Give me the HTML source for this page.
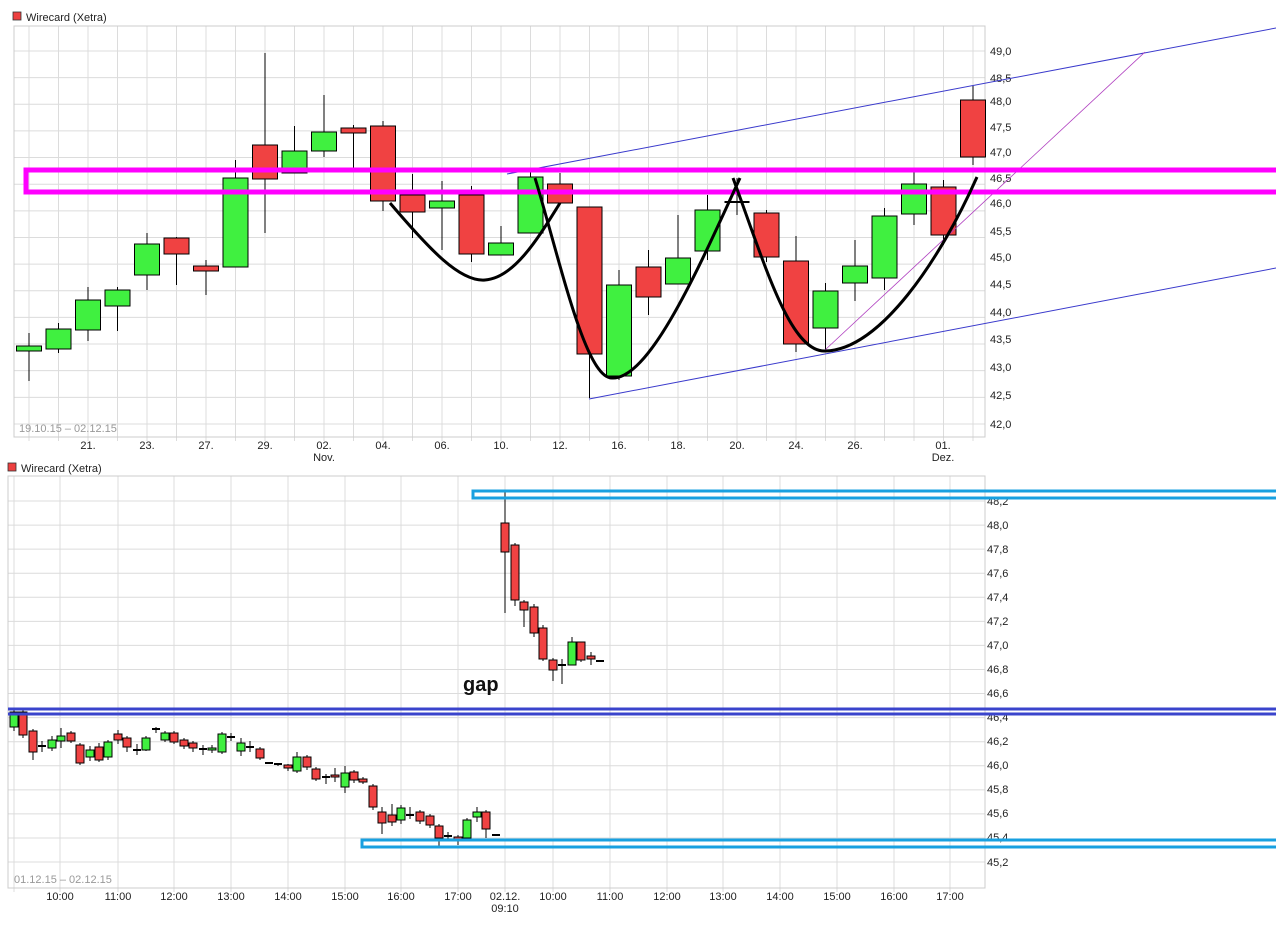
<!DOCTYPE html>
<html><head><meta charset="utf-8">
<style>
html,body{margin:0;padding:0;background:#fff;width:1276px;height:942px;overflow:hidden}
svg{display:block;font-family:"Liberation Sans",sans-serif}
text{font-size:11px;fill:#222}
</style></head><body>
<svg id="s" width="1276" height="942" viewBox="0 0 1276 942" xmlns="http://www.w3.org/2000/svg">
<g id="grid"></g>
<!-- titles -->
<rect x="13" y="12" width="8" height="8" fill="#ee4040" stroke="#333" stroke-width="0.8"/>
<text x="26" y="21">Wirecard (Xetra)</text>
<rect x="8" y="463" width="8" height="8" fill="#ee4040" stroke="#333" stroke-width="0.8"/>
<text x="21" y="472">Wirecard (Xetra)</text>
<!-- top axis labels -->
<g>
<text x="990" y="55">49,0</text><text x="990" y="82">48,5</text><text x="990" y="105">48,0</text>
<text x="990" y="131">47,5</text><text x="990" y="156">47,0</text><text x="990" y="182">46,5</text>
<text x="990" y="207">46,0</text><text x="990" y="235">45,5</text><text x="990" y="261">45,0</text>
<text x="990" y="288">44,5</text><text x="990" y="316">44,0</text><text x="990" y="343">43,5</text>
<text x="990" y="371">43,0</text><text x="990" y="399">42,5</text><text x="990" y="428">42,0</text>
</g>
<g text-anchor="middle">
<text x="88" y="449">21.</text><text x="147" y="449">23.</text><text x="206" y="449">27.</text>
<text x="265" y="449">29.</text><text x="324" y="449">02.</text><text x="324" y="461">Nov.</text>
<text x="383" y="449">04.</text><text x="442" y="449">06.</text><text x="501" y="449">10.</text>
<text x="560" y="449">12.</text><text x="619" y="449">16.</text><text x="678" y="449">18.</text>
<text x="737" y="449">20.</text><text x="796" y="449">24.</text><text x="855" y="449">26.</text>
<text x="943" y="449">01.</text><text x="943" y="461">Dez.</text>
</g>
<text x="19" y="432" style="fill:#999">19.10.15 – 02.12.15</text>
<!-- bottom axis labels -->
<g>
<text x="987" y="505">48,2</text><text x="987" y="529">48,0</text><text x="987" y="553">47,8</text>
<text x="987" y="577">47,6</text><text x="987" y="601">47,4</text><text x="987" y="625">47,2</text>
<text x="987" y="649">47,0</text><text x="987" y="673">46,8</text><text x="987" y="697">46,6</text>
<text x="987" y="721">46,4</text><text x="987" y="745">46,2</text><text x="987" y="769">46,0</text>
<text x="987" y="793">45,8</text><text x="987" y="817">45,6</text><text x="987" y="841">45,4</text>
<text x="987" y="866">45,2</text>
</g>
<g text-anchor="middle">
<text x="60" y="900">10:00</text><text x="118" y="900">11:00</text><text x="174" y="900">12:00</text>
<text x="231" y="900">13:00</text><text x="288" y="900">14:00</text><text x="345" y="900">15:00</text>
<text x="401" y="900">16:00</text><text x="458" y="900">17:00</text><text x="505" y="900">02.12.</text>
<text x="505" y="912">09:10</text><text x="553" y="900">10:00</text><text x="610" y="900">11:00</text>
<text x="667" y="900">12:00</text><text x="723" y="900">13:00</text><text x="780" y="900">14:00</text>
<text x="837" y="900">15:00</text><text x="894" y="900">16:00</text><text x="950" y="900">17:00</text>
</g>
<text x="14" y="883" style="fill:#999">01.12.15 – 02.12.15</text>
<g id="c"></g>
<!-- top overlays -->
<line x1="507" y1="174" x2="1276" y2="28" stroke="#3a3acc" stroke-width="1"/>
<line x1="589" y1="399" x2="1276" y2="268" stroke="#3a3acc" stroke-width="1"/>
<line x1="825" y1="350" x2="1145" y2="52" stroke="#b040c0" stroke-width="0.8"/>
<rect x="26" y="170" width="1260" height="22" fill="none" stroke="#ff00ff" stroke-width="5"/>
<g fill="none" stroke="#000" stroke-width="3">
<path d="M390,203 C430,250 460,282 485,280 C515,278 540,235 560,203"/>
<path d="M535,178 C560,260 585,378 612,378 C650,380 700,265 740,178"/>
<path d="M733,178 C765,265 790,352 825,351 C880,350 940,260 977,177"/>
</g>
<!-- bottom overlays -->
<rect x="473" y="491" width="810" height="7" fill="none" stroke="#18a0e0" stroke-width="3"/>
<rect x="362" y="840" width="920" height="7" fill="none" stroke="#18a0e0" stroke-width="3"/>
<line x1="8" y1="709" x2="1276" y2="709" stroke="#3a44cc" stroke-width="3"/>
<line x1="8" y1="714" x2="1276" y2="714" stroke="#3a44cc" stroke-width="3"/>
<text x="463" y="691" style="font-size:20px;font-weight:bold;fill:#111">gap</text>
</svg>
<script>
var ns="http://www.w3.org/2000/svg",G=document.getElementById('grid'),C=document.getElementById('c');
function el(p,t,a){var e=document.createElementNS(ns,t);for(var k in a)e.setAttribute(k,a[k]);p.appendChild(e);return e;}
// top grid
for(var i=0;i<15;i++){var y=51+i*26.64;el(G,'line',{x1:14,x2:985,y1:y,y2:y,stroke:'#dcdcdc'});}
for(var i=0;i<33;i++){var x=29+i*29.5;el(G,'line',{x1:x,x2:x,y1:26,y2:441,stroke:'#dcdcdc'});}
el(G,'rect',{x:14,y:26,width:971,height:411,fill:'none',stroke:'#ccc'});
// bottom grid
for(var i=0;i<16;i++){var y=501+i*24.07;el(G,'line',{x1:8,x2:985,y1:y,y2:y,stroke:'#dcdcdc'});}
[14,60,118,174,231,288,345,401,458,505,553,610,667,723,780,837,894,950].forEach(function(x){el(G,'line',{x1:x,x2:x,y1:476,y2:892,stroke:'#dcdcdc'});});
el(G,'rect',{x:8,y:476,width:977,height:412,fill:'none',stroke:'#ccc'});
var GR='#40f040',RD='#f04242';
function cd(x,w,o,c,h,l,col){el(C,'line',{x1:x,x2:x,y1:h,y2:l,stroke:'#000'});
 if(Math.abs(o-c)<2){el(C,'line',{x1:x-w/2,x2:x+w/2,y1:o,y2:o,stroke:'#000','stroke-width':2});}
 else el(C,'rect',{x:x-w/2,y:Math.min(o,c),width:w,height:Math.abs(o-c),fill:col,stroke:'#000'});}
var T=[['g',346,351,333,381],['g',329,349,323,353],['g',300,330,287,341],['g',290,306,287,331],['g',244,275,233,290],
['r',238,254,237,285],['r',266,271,260,295],['g',178,267,160,267],['r',145,179,53,233],['g',151,173,126,173],
['g',132,151,95,157],['r',128,133,125,168],['r',126,201,121,211],['r',195,212,174,238],['g',201,208,181,250],
['r',195,254,186,262],['g',243,255,226,255],['g',177,233,170,233],['r',184,203,173,203],['r',207,354,207,398],
['g',285,376,270,380],['r',267,297,250,315],['g',258,284,215,284],['g',210,251,195,260],['g',202,202,178,215],
['r',213,257,210,262],['r',261,344,236,352],['g',291,328,283,350],['g',266,283,240,301],['g',216,278,208,290],
['g',184,214,172,225],['r',187,235,180,245],['r',100,157,86,165]];
T.forEach(function(d,i){cd(29+i*29.5,25,d[1],d[2],d[3],d[4],d[0]=='g'?GR:RD);});
var B=[[14,'g',712,727,710,731],[23,'r',712,735,710,738],[33,'r',731,752,729,760],[42,'d',746,746,741,752],[52,'g',740,748,736,751],
[61,'g',736,741,728,748],[71,'r',733,741,731,743],[80,'r',745,763,743,765],[90,'g',750,757,746,761],[99,'r',747,760,743,762],
[108,'g',742,757,740,760],[118,'r',734,740,730,744],[127,'r',738,747,736,752],[137,'d',750,750,744,755],[146,'g',738,750,736,751],
[156,'d',729,729,727,733],[165,'g',733,740,731,742],[174,'r',733,742,731,744],[184,'r',740,746,738,749],[193,'r',743,748,741,752],
[203,'d',749,749,745,755],[212,'g',748,750,745,753],[222,'g',734,752,732,754],[231,'d',737,737,733,741],[241,'g',743,751,738,756],
[250,'d',747,747,741,752],[260,'r',749,758,747,760],[269,'d',763,763,762,764],[278,'d',764,764,763,766],[288,'r',765,768,764,771],
[297,'g',757,771,752,773],[307,'r',757,767,755,770],[316,'r',769,779,767,781],[326,'g',777,778,774,784],[335,'r',775,777,768,782],
[345,'g',773,787,766,793],[354,'r',772,780,770,783],[363,'r',779,782,777,784],[373,'r',786,807,784,810],[382,'r',812,823,807,834],
[392,'r',815,822,804,826],[401,'g',808,820,805,824],[410,'d',815,815,807,819],[420,'r',812,821,810,824],[430,'r',816,825,814,828],
[439,'r',826,838,824,847],[448,'d',836,836,832,839],[458,'r',837,840,835,845],[467,'g',820,838,818,840],[477,'g',812,817,807,822],
[486,'r',812,829,810,838],[496,'d',835,835,835,835],
[505,'r',523,552,492,613],[515,'r',545,600,543,606],[524,'r',602,610,600,627],[534,'r',607,633,604,637],[543,'r',628,659,625,661],
[553,'r',660,670,658,681],[562,'d',665,665,659,684],[572,'g',642,665,637,665],[581,'r',642,660,642,662],[591,'r',656,659,652,665],[600,'d',661,661,661,661]];
B.forEach(function(d){cd(d[0],8,d[2],d[3],d[4],d[5],d[1]=='g'?GR:RD);});
</script>
</body></html>
